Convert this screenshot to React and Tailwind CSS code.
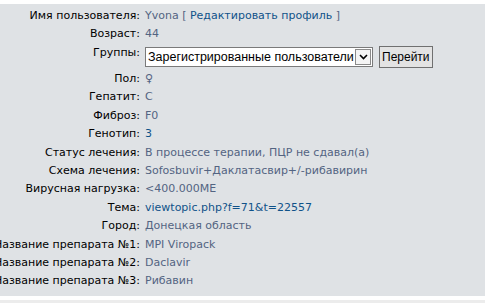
const rows = [
  { label: "Пол", value: "♀" },
  { label: "Гепатит", value: "C" },
  { label: "Фиброз", value: "F0" },
  { label: "Генотип", value: "3", link: true },
  { label: "Статус лечения", value: "В процессе терапии, ПЦР не сдавал(а)" },
  { label: "Схема лечения", value: "Sofosbuvir+Даклатасвир+/-рибавирин" },
  { label: "Вирусная нагрузка", value: "<400.000ME" },
  { label: "Тема", value: "viewtopic.php?f=71&t=22557", link: true },
  { label: "Город", value: "Донецкая область" },
  { label: "Название препарата №1", value: "MPI Viropack" },
  { label: "Название препарата №2", value: "Daclavir" },
  { label: "Название препарата №3", value: "Рибавин" },
];

function Label({ children }) {
  return (
    <div className="w-[140px] shrink-0 flex justify-end whitespace-nowrap text-black">
      {children}:
    </div>
  );
}

export default function App() {
  return (
    <div
      className="w-[485px] h-[303px] overflow-hidden bg-[#ececec] text-[11px] leading-[18.4px]"
      style={{ fontFamily: '"DejaVu Sans", Verdana, sans-serif' }}
    >
      <div className="bg-white pt-[4px] pb-[4px]">
        <div className="bg-[#dfe2e5] pt-[3px] pb-[5px] h-[292px]">
          <div className="flex">
            <Label>Имя пользователя</Label>
            <div className="pl-[5px] text-[#536482] whitespace-nowrap">
              Yvona [ <span className="text-[#105289]">Редактировать профиль</span> ]
            </div>
          </div>
          <div className="flex">
            <Label>Возраст</Label>
            <div className="pl-[5px] text-[#536482]">44</div>
          </div>
          <div className="flex h-[26.2px]">
            <Label>Группы</Label>
            <div
              className="pl-[5px] pt-[3px] flex items-start gap-[6px]"
              style={{ fontFamily: '"Liberation Sans", Arial, sans-serif' }}
            >
              <div className="w-[228px] h-[20px] bg-white border border-[#7a7a7a] flex items-center overflow-hidden">
                <div className="flex-1 overflow-hidden whitespace-nowrap pl-[2px] text-[12.5px] leading-[18px] text-black">
                  Зарегистрированные пользователи
                </div>
                <div className="w-[16px] h-[16px] mr-[1px] border border-[#8a8a8a] bg-[#f4f4f4] flex items-center justify-center shrink-0">
                  <svg width="9" height="6" viewBox="0 0 9 6">
                    <path d="M1 1 L4.5 4.5 L8 1" stroke="#000" strokeWidth="1.6" fill="none" />
                  </svg>
                </div>
              </div>
              <div className="h-[22px] -mt-[1px] px-[2px] bg-[#e3e3e3] border border-[#707070] flex items-center text-[12px] text-black">
                Перейти
              </div>
            </div>
          </div>
          {rows.map((r) => (
            <div key={r.label} className="flex">
              <Label>{r.label}</Label>
              <div
                className={
                  "pl-[5px] whitespace-nowrap " +
                  (r.link ? "text-[#105289]" : "text-[#536482]")
                }
              >
                {r.value}
              </div>
            </div>
          ))}
        </div>
      </div>
    </div>
  );
}
